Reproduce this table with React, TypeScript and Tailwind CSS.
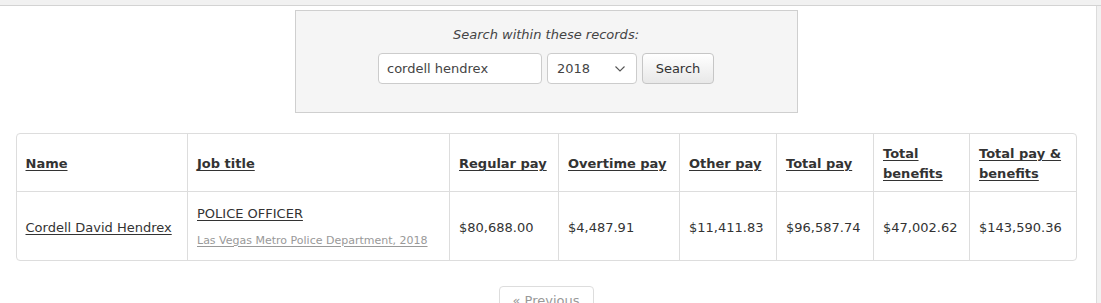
const rows = [
  {
    name: "Cordell David Hendrex",
    title: "POLICE OFFICER",
    agency: "Las Vegas Metro Police Department, 2018",
    regular: "$80,688.00",
    overtime: "$4,487.91",
    other: "$11,411.83",
    total: "$96,587.74",
    benefits: "$47,002.62",
    totalBenefits: "$143,590.36",
  },
];

const headers = [
  { label: "Name", w: "w-[171px]" },
  { label: "Job title", w: "w-[262px]" },
  { label: "Regular pay", w: "w-[109px]" },
  { label: "Overtime pay", w: "w-[121px]" },
  { label: "Other pay", w: "w-[97px]" },
  { label: "Total pay", w: "w-[97px]" },
  { label: "Total benefits", w: "w-[96px]" },
  { label: "Total pay & benefits", w: "w-[107px]" },
];

export default function App() {
  return (
    <div className="h-[303px] w-[1101px] overflow-hidden bg-[#f1f1f1] font-['DejaVu_Sans',Verdana,sans-serif] text-[13px] text-[#333]">
      <div className="h-[6px] border-b border-[#d3d3d3] bg-[#f1f1f1]" />
      <div className="flex h-full w-[1097px] flex-col items-center border-r border-[#dcdcdc] bg-white pr-[4px]">
        <div className="mt-[4px] flex h-[103px] w-[503px] shrink-0 flex-col items-center border border-[#cfcfcf] bg-[#f5f5f5] pt-[14px]">
          <p className="italic leading-[20px] text-[#444]">Search within these records:</p>
          <div className="mt-[8px] flex gap-[5px]">
            <input
              readOnly
              value="cordell hendrex"
              className="h-[31px] w-[164px] rounded-[4px] border border-[#ccc] bg-white px-[8px] text-[13px] text-[#444] outline-none"
            />
            <div className="flex h-[31px] w-[90px] items-center justify-between rounded-[4px] border border-[#ccc] bg-white pl-[9px] pr-[10px] text-[#444]">
              <span>2018</span>
              <svg width="12" height="8" viewBox="0 0 12 8" fill="none" stroke="#555" strokeWidth="1.1">
                <path d="M1.5 1.5 L6 6 L10.5 1.5" />
              </svg>
            </div>
            <button className="h-[31px] w-[72px] rounded-[4px] border border-[#c6c6c6] bg-gradient-to-b from-white to-[#e8e8e8] text-[13px] text-[#333]">
              Search
            </button>
          </div>
        </div>

        <div className="mt-[20px] w-[1061px] shrink-0 overflow-hidden rounded-[4px] border border-[#ddd]">
          <table className="w-full table-fixed border-collapse">
            <colgroup>
              {headers.map((h) => (
                <col key={h.label} className={h.w} />
              ))}
            </colgroup>
            <thead>
              <tr className="h-[57px]">
                {headers.map((h, i) => (
                  <th
                    key={h.label}
                    className={`px-[9px] pt-[4px] text-left align-middle font-bold leading-[20px] ${i > 0 ? "border-l border-[#ddd]" : ""}`}
                  >
                    <a className="underline underline-offset-[2px]">{h.label}</a>
                  </th>
                ))}
              </tr>
            </thead>
            <tbody>
              {rows.map((r) => (
                <tr key={r.name} className="h-[69px] border-t border-[#ddd]">
                  <td className="px-[9px] pt-[4px] align-middle">
                    <a className="underline underline-offset-[2px]">{r.name}</a>
                  </td>
                  <td className="border-l border-[#ddd] px-[9px] pt-[1px] align-middle">
                    <a className="block leading-[18px] underline underline-offset-[2px]">{r.title}</a>
                    <a className="mt-[11px] block text-[11px] leading-[14px] text-[#999] underline underline-offset-[2px]">{r.agency}</a>
                  </td>
                  {[r.regular, r.overtime, r.other, r.total, r.benefits, r.totalBenefits].map((v, i) => (
                    <td key={i} className="border-l border-[#ddd] px-[9px] pt-[4px] align-middle">
                      {v}
                    </td>
                  ))}
                </tr>
              ))}
            </tbody>
          </table>
        </div>

        <div className="mt-[25px] flex h-[30px] w-[95px] shrink-0 items-center justify-center rounded-[4px] border border-[#ddd] bg-white text-[#999]">
          « Previous
        </div>
      </div>
    </div>
  );
}
